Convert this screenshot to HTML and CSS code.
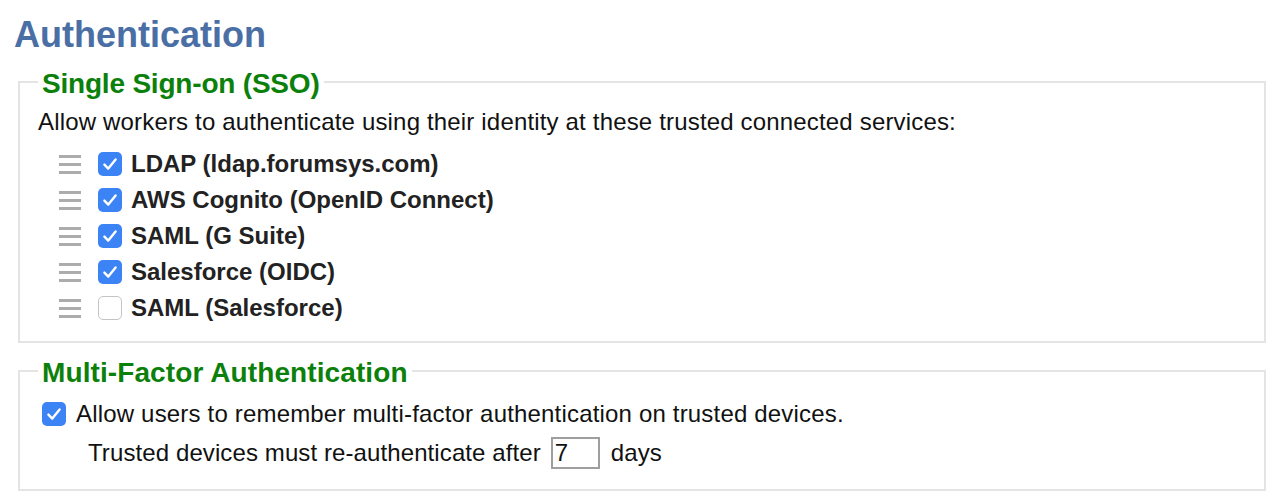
FILE: index.html
```html
<!DOCTYPE html>
<html lang="en">
<head>
<meta charset="utf-8">
<title>Authentication</title>
<link rel="stylesheet" href="styles.css">
</head>
<body>
<div class="page">
  <h1 class="title">Authentication</h1>

  <fieldset class="group sso">
    <legend class="group-title">Single Sign-on (SSO)</legend>
    <p class="desc">Allow workers to authenticate using their identity at these trusted connected services:</p>
    <ul class="providers">
      <li class="provider">
        <svg class="handle" width="22" height="19" viewBox="0 0 22 19"><rect y="0" width="22" height="3"/><rect y="8" width="22" height="3"/><rect y="16" width="22" height="3"/></svg>
        <span class="cb checked"><svg width="24" height="24" viewBox="0 0 24 24"><path d="M6.4 12.6 L10.3 16.6 L17.6 7.4"/></svg></span>
        <span class="provider-name">LDAP (ldap.forumsys.com)</span>
      </li>
      <li class="provider">
        <svg class="handle" width="22" height="19" viewBox="0 0 22 19"><rect y="0" width="22" height="3"/><rect y="8" width="22" height="3"/><rect y="16" width="22" height="3"/></svg>
        <span class="cb checked"><svg width="24" height="24" viewBox="0 0 24 24"><path d="M6.4 12.6 L10.3 16.6 L17.6 7.4"/></svg></span>
        <span class="provider-name">AWS Cognito (OpenID Connect)</span>
      </li>
      <li class="provider">
        <svg class="handle" width="22" height="19" viewBox="0 0 22 19"><rect y="0" width="22" height="3"/><rect y="8" width="22" height="3"/><rect y="16" width="22" height="3"/></svg>
        <span class="cb checked"><svg width="24" height="24" viewBox="0 0 24 24"><path d="M6.4 12.6 L10.3 16.6 L17.6 7.4"/></svg></span>
        <span class="provider-name">SAML (G Suite)</span>
      </li>
      <li class="provider">
        <svg class="handle" width="22" height="19" viewBox="0 0 22 19"><rect y="0" width="22" height="3"/><rect y="8" width="22" height="3"/><rect y="16" width="22" height="3"/></svg>
        <span class="cb checked"><svg width="24" height="24" viewBox="0 0 24 24"><path d="M6.4 12.6 L10.3 16.6 L17.6 7.4"/></svg></span>
        <span class="provider-name">Salesforce (OIDC)</span>
      </li>
      <li class="provider">
        <svg class="handle" width="22" height="19" viewBox="0 0 22 19"><rect y="0" width="22" height="3"/><rect y="8" width="22" height="3"/><rect y="16" width="22" height="3"/></svg>
        <span class="cb"></span>
        <span class="provider-name">SAML (Salesforce)</span>
      </li>
    </ul>
  </fieldset>

  <fieldset class="group mfa">
    <legend class="group-title">Multi-Factor Authentication</legend>
    <div class="mfa-row">
      <span class="cb checked"><svg width="24" height="24" viewBox="0 0 24 24"><path d="M6.4 12.6 L10.3 16.6 L17.6 7.4"/></svg></span>
      <span class="mfa-text">Allow users to remember multi-factor authentication on trusted devices.</span>
    </div>
    <div class="mfa-sub">
      <span>Trusted devices must re-authenticate after</span>
      <input class="days-input" type="text" value="7">
      <span>days</span>
    </div>
  </fieldset>
</div>
</body>
</html>
```

FILE: styles.css
```css
html, body {
  margin: 0;
  padding: 0;
  background: #ffffff;
}

body {
  font-family: "Liberation Sans", Arial, Helvetica, sans-serif;
  font-size: 24px;
  color: #111111;
}

.page {
  padding: 13px 16px 0 14px;
}

.title {
  margin: 0;
  font-size: 36px;
  line-height: 43px;
  font-weight: bold;
  color: #4a6fa5;
}

.group {
  margin: 8px 0 0 4px;
  border: 2px solid #e4e4e4;
  padding: 4px 18px 15px 18px;
  min-width: 0;
}

.group.mfa {
  margin-top: 10px;
  padding-top: 7px;
  padding-bottom: 18px;
}

.group-title {
  padding: 4px 4px 0 4px;
  font-size: 28px;
  line-height: 32px;
  font-weight: bold;
  color: #0b800b;
}

.sso .group-title {
  letter-spacing: -0.2px;
}

.mfa .group-title {
  letter-spacing: 0.1px;
}

.desc {
  margin: 0 0 6px 0;
  line-height: 36px;
  letter-spacing: 0.17px;
  color: #111111;
}

.providers {
  list-style: none;
  margin: 0;
  padding: 0;
}

.provider {
  display: flex;
  align-items: center;
  height: 36px;
  padding-left: 21px;
}

.handle {
  flex: none;
  fill: #acacac;
  margin-right: 17px;
}

.cb {
  flex: none;
  display: inline-flex;
  box-sizing: border-box;
  width: 24px;
  height: 24px;
  border-radius: 5px;
  border: 1px solid #c4c4c4;
  background: #ffffff;
}

.cb.checked {
  border: none;
  background: #3c83f6;
}

.cb svg path {
  fill: none;
  stroke: #ffffff;
  stroke-width: 2.4;
  stroke-linecap: round;
  stroke-linejoin: round;
}

.provider-name {
  margin-left: 9px;
  font-weight: bold;
  color: #222222;
  line-height: 36px;
}

.mfa-row {
  display: flex;
  align-items: center;
  height: 36px;
  padding-left: 4px;
}

.mfa-text {
  margin-left: 10px;
  line-height: 36px;
  letter-spacing: 0.18px;
}

.mfa-sub {
  display: flex;
  align-items: center;
  height: 36px;
  margin-top: 3px;
  padding-left: 50px;
  letter-spacing: 0.1px;
}

.days-input {
  box-sizing: border-box;
  width: 49px;
  height: 32px;
  margin: 0 11px 0 10px;
  padding: 0 0 0 2px;
  border: 2px solid #9e9e9e;
  border-radius: 0;
  font-family: "Liberation Sans", Arial, Helvetica, sans-serif;
  font-size: 24px;
  color: #111111;
  background: #ffffff;
  outline: none;
}
```
